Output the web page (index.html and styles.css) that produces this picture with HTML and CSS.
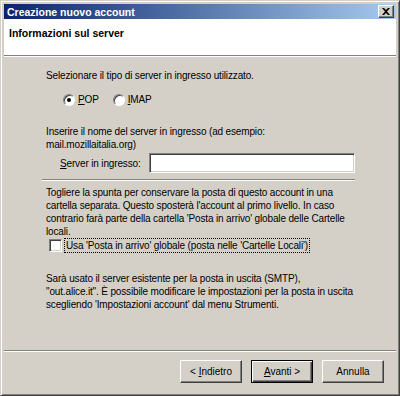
FILE: index.html
```html
<!DOCTYPE html>
<html lang="it">

<head>
    <meta charset="UTF-8">
    <title>Creazione nuovo account</title>
    <link rel="stylesheet" href="styles.css">
</head>

<body>
    <div class="window">
        <div class="titlebar">
            <span class="title">Creazione nuovo account</span>
            <span class="close-btn">
                <svg width="8" height="7" viewBox="0 0 8 7">
                    <path d="M0 0h2l2 2 2-2h2L5 3.5 8 7H6L4 5 2 7H0l3-3.5z" fill="#000" />
                </svg>
            </span>
        </div>

        <div class="header">Informazioni sul server</div>

        <div class="content">
            <p class="line">Selezionare il tipo di server in ingresso utilizzato.</p>

            <div class="radios">
                <label class="radio"><span class="dot checked"></span><span><u>P</u>OP</span></label>
                <label class="radio"><span class="dot"></span><span><u>I</u>MAP</span></label>
            </div>

            <p class="line spaced">Inserire il nome del server in ingresso (ad esempio:<br>mail.mozillaitalia.org)</p>

            <div class="server-row">
                <span class="server-label"><u>S</u>erver in ingresso:</span>
                <span class="textbox"></span>
            </div>

            <div class="etched"></div>

            <p class="line">Togliere la spunta per conservare la posta di questo account in una<br>cartella separata. Questo sposterà l'account al primo livello. In caso<br>contrario farà parte della cartella 'Posta in arrivo' globale delle Cartelle<br>locali.</p>

            <div class="check-row">
                <span class="checkbox"></span>
                <span class="check-label">Usa 'Posta in arrivo' globale (posta nelle 'Cartelle Locali')</span>
            </div>

            <p class="line smtp">Sarà usato il server esistente per la posta in uscita (SMTP),<br>"out.alice.it". È possibile modificare le impostazioni per la posta in uscita<br>scegliendo 'Impostazioni account' dal menu Strumenti.</p>
        </div>

        <div class="footer">
            <button class="btn">&lt; <u>I</u>ndietro</button>
            <button class="btn default"><u>A</u>vanti &gt;</button>
            <button class="btn">Annulla</button>
        </div>
    </div>
</body>

</html>
```

FILE: styles.css
```css
body {
    margin: 0;
    font-family: "Liberation Sans", Arial, sans-serif;
    font-size: 10px;
    color: #000;
    background: #d4d0c8;
}

u {
    text-decoration: underline;
    text-underline-offset: 1px;
}

.window {
    width: 400px;
    height: 396px;
    box-sizing: border-box;
    background: #d4d0c8;
    border: 1px solid;
    border-color: #d4d0c8 #404040 #404040 #d4d0c8;
    box-shadow: inset 1px 1px #fff, inset -1px -1px #808080;
    padding: 3px;
    display: flex;
    flex-direction: column;
}

.titlebar {
    height: 15px;
    display: flex;
    align-items: center;
    justify-content: space-between;
    padding: 0 2px 0 3px;
    background: linear-gradient(to right, #0a246a, #a6caf0);
    color: #fff;
    font-weight: bold;
    font-size: 10.5px;
}

.close-btn {
    width: 16px;
    height: 13px;
    box-sizing: border-box;
    display: flex;
    align-items: center;
    justify-content: center;
    background: #d4d0c8;
    border: 1px solid;
    border-color: #fff #404040 #404040 #fff;
    box-shadow: inset -1px -1px #808080;
}

.header {
    height: 37px;
    box-sizing: border-box;
    background: #fff;
    padding: 8px 0 0 5px;
    font-weight: bold;
    font-size: 10.5px;
    border-bottom: 1px solid #808080;
    box-shadow: 0 1px #fff;
}

.content {
    flex: 1;
    padding: 13px 0 0 42px;
    letter-spacing: -0.15px;
    white-space: nowrap;
}

.line {
    margin: 0;
    line-height: 13px;
}

.radios {
    display: flex;
    gap: 14px;
    margin: 11px 0 0 17px;
    height: 13px;
    line-height: 13px;
}

.radio {
    display: flex;
    align-items: center;
    gap: 3px;
}

.dot {
    width: 12px;
    height: 12px;
    box-sizing: border-box;
    border-radius: 50%;
    background: #fff;
    border: 1px solid;
    border-color: #808080 #fff #fff #808080;
    box-shadow: inset 1px 1px #404040;
    display: flex;
    align-items: center;
    justify-content: center;
}

.dot.checked::after {
    content: "";
    width: 4px;
    height: 4px;
    border-radius: 50%;
    background: #000;
}

.spaced {
    margin-top: 19px;
}

.server-row {
    display: flex;
    align-items: center;
    margin-top: 2px;
    padding-left: 14px;
    height: 20px;
}

.server-label {
    width: 89px;
}

.textbox {
    width: 206px;
    height: 20px;
    box-sizing: border-box;
    background: #fff;
    border: 1px solid;
    border-color: #808080 #fff #fff #808080;
    box-shadow: inset 1px 1px #404040, inset -1px -1px #d4d0c8;
}

.etched {
    width: 313px;
    margin: 6px 0 5px -4px;
    border-top: 1px solid #808080;
    border-bottom: 1px solid #fff;
}

.check-row {
    display: flex;
    align-items: center;
    gap: 2px;
    margin: 0 0 0 3px;
    height: 15px;
}

.checkbox {
    width: 13px;
    height: 13px;
    box-sizing: border-box;
    background: #fff;
    border: 1px solid;
    border-color: #808080 #fff #fff #808080;
    box-shadow: inset 1px 1px #404040, inset -1px -1px #d4d0c8;
}

.check-label {
    border: 1px dotted #000;
    padding: 0 1px;
    line-height: 13px;
}

.smtp {
    margin-top: 19px;
}

.footer {
    height: 42px;
    box-sizing: border-box;
    border-top: 1px solid #808080;
    box-shadow: inset 0 1px #fff;
    display: flex;
    justify-content: flex-end;
    gap: 9px;
    padding: 9px 12px 0 0;
}

.btn {
    width: 62px;
    height: 23px;
    box-sizing: border-box;
    font: inherit;
    color: #000;
    background: #d4d0c8;
    border: 1px solid;
    border-color: #fff #404040 #404040 #fff;
    box-shadow: inset -1px -1px #808080;
    padding: 0;
}

.btn.default {
    border-color: #000;
    box-shadow: inset 1px 1px #fff, inset -1px -1px #404040, inset -2px -2px #808080;
}
```
